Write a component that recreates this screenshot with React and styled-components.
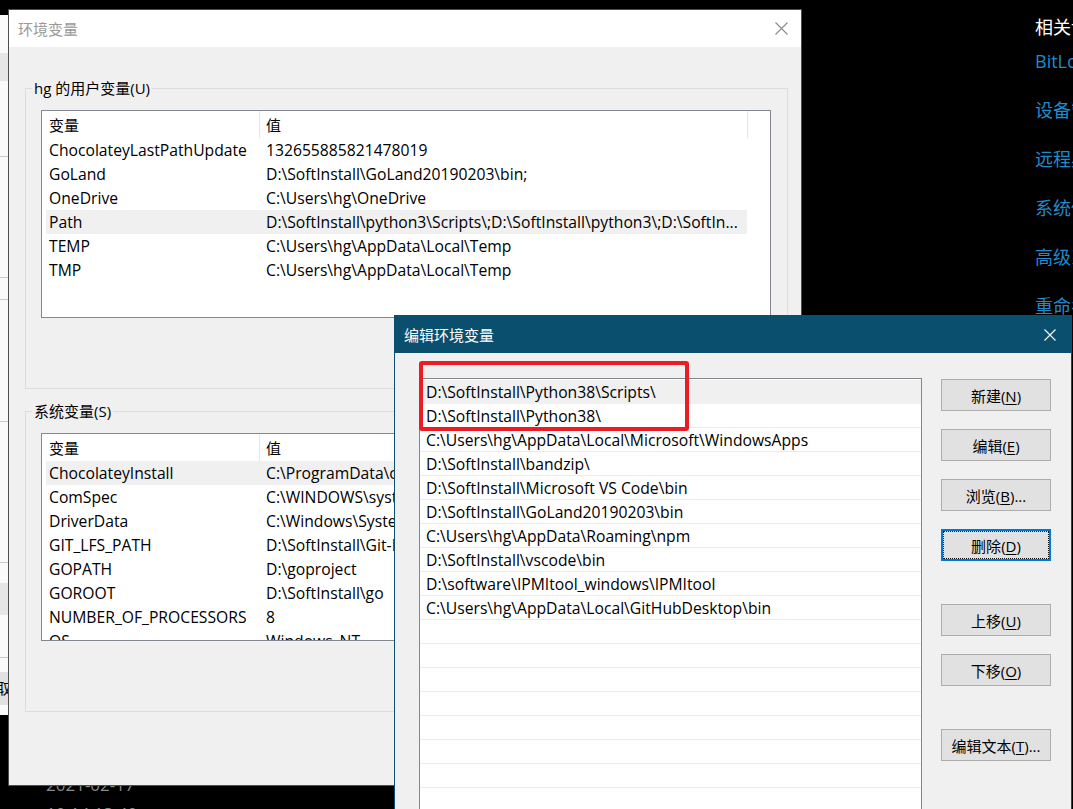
import React from 'react';
import styled, { createGlobalStyle } from 'styled-components';

const UI_FONT = `"Open Sans", "Noto Sans CJK SC", sans-serif`;

const GlobalStyle = createGlobalStyle`
  html, body { margin: 0; padding: 0; background: #000; }
  body { font-family: ${UI_FONT}; color: #000; }
  * { box-sizing: border-box; }
`;

const Desktop = styled.div`
  position: relative;
  width: 1073px;
  height: 809px;
  overflow: hidden;
  background: #000;
`;

/* window left behind the dialogs, only a sliver shows */
const BackWindow = styled.div`
  position: absolute;
  left: 0;
  top: 15px;
  width: 8px;
  height: 700px;
  display: flex;
  flex-direction: column;
  overflow: hidden;
  background: #fafafa;
`;

const Strip = styled.div`
  flex-shrink: 0;
  height: ${p => p.$h}px;
  background: ${p => p.$bg || '#fafafa'};
  border-bottom: ${p => (p.$line ? '1px solid #c9c9c9' : 'none')};
  font-size: 15px;
  line-height: ${p => p.$h}px;
  white-space: nowrap;
  text-indent: -4px;
`;

const SettingsPanel = styled.div`
  position: absolute;
  left: 1035px;
  top: 15px;
  display: flex;
  flex-direction: column;
  gap: 25px;
  font-size: 18px;
  line-height: 24px;
  white-space: nowrap;
`;

const SettingsHeading = styled.div`
  color: #fff;
  margin-bottom: -15px;
`;

const SettingsLink = styled.div`
  color: #1f8ccf;
`;

const DesktopClock = styled.div`
  position: absolute;
  left: 46px;
  top: 770px;
  color: #8a8a8a;
  font-size: 17px;
  line-height: 29px;
`;

const Window = styled.div`
  position: absolute;
  left: ${p => p.$x}px;
  top: ${p => p.$y}px;
  width: ${p => p.$w}px;
  height: ${p => p.$h}px;
  border: 1px solid ${p => p.$frame};
  background: #f0f0f0;
  display: flex;
  flex-direction: column;
`;

const TitleBar = styled.div`
  flex-shrink: 0;
  height: 37px;
  display: flex;
  align-items: center;
  justify-content: space-between;
  padding: 0 ${p => p.$padRight}px 0 9px;
  background: ${p => (p.$active ? '#0a4f6e' : '#fff')};
  color: ${p => (p.$active ? '#fff' : '#9a9a9a')};
  font-size: 15px;
`;

const EnvBody = styled.div`
  padding: 41px 13px 0 16px;
  display: flex;
  flex-direction: column;
`;

const Group = styled.div`
  position: relative;
  border: 1px solid #dcdcdc;
  padding: 21px 16px 70px 15px;
  & + & {
    margin-top: 22px;
  }
`;

const GroupLabel = styled.span`
  position: absolute;
  top: -11px;
  left: 6px;
  padding: 0 2px;
  background: #f0f0f0;
  font-size: 15px;
  line-height: 20px;
`;

const ListView = styled.div`
  height: 208px;
  border: 1px solid #828790;
  background: #fff;
  overflow: hidden;
`;

const ListHeader = styled.div`
  display: flex;
  height: 27px;
`;

const HeaderCell = styled.div`
  flex: ${p => (p.$w ? `0 0 ${p.$w}px` : '1')};
  padding-left: ${p => p.$pad}px;
  border-right: ${p => (p.$w ? '1px solid #e5e5e5' : 'none')};
  display: flex;
  align-items: center;
  font-size: 15px;
`;

const ListRow = styled.div`
  display: flex;
  align-items: center;
  height: 24px;
  width: 701px;
  margin-left: 4px;
  background: ${p => (p.$selected ? '#f0f0f0' : 'transparent')};
  font-size: 15.7px;
  white-space: nowrap;
`;

const NameCell = styled.div`
  flex: 0 0 213px;
  padding-left: 3px;
  overflow: hidden;
`;

const ValueCell = styled.div`
  flex: 1;
  padding-left: 7px;
  overflow: hidden;
`;

const EditBody = styled.div`
  position: relative;
  flex: 1;
  display: flex;
  gap: 19px;
  padding: 25px 19px 0 24px;
  min-height: 0;
`;

const PathList = styled.div`
  flex: 0 0 503px;
  border: 1px solid #828790;
  border-bottom: none;
  background: #fff;
  padding-top: 1px;
  overflow: hidden;
`;

const PathRow = styled.div`
  height: 24px;
  display: flex;
  align-items: center;
  padding-left: 6px;
  border-bottom: 1px solid ${p => (p.$selected ? '#f0f0f0' : '#ebebeb')};
  background: ${p => (p.$selected ? '#f0f0f0' : '#fff')};
  font-size: 15.7px;
  white-space: nowrap;
`;

const ButtonColumn = styled.div`
  flex: 0 0 110px;
  display: flex;
  flex-direction: column;
  padding-top: 1px;
`;

const DialogButton = styled.button`
  position: relative;
  height: 32px;
  margin-top: ${p => p.$gap || 0}px;
  padding: 0;
  background: #e1e1e1;
  border: ${p => (p.$focused ? '2px solid #0078d7' : '1px solid #adadad')};
  font-family: ${UI_FONT};
  font-size: 15px;
  color: #000;
  ${p =>
    p.$focused &&
    `
    &::after {
      content: '';
      position: absolute;
      inset: 0;
      border: 1px dotted #111;
    }
  `}
`;

const Key = styled.span`
  text-decoration: underline;
  text-underline-offset: 2px;
`;

const RedMark = styled.div`
  position: absolute;
  left: 24px;
  top: 8px;
  width: 270px;
  height: 70px;
  border: 4px solid #ed1c24;
  border-radius: 3px;
  pointer-events: none;
`;

const CloseIcon = ({ color, size }) => (
  <svg width={size} height={size} viewBox={`0 0 ${size} ${size}`}>
    <path d={`M0.5 0.5 L${size - 0.5} ${size - 0.5} M${size - 0.5} 0.5 L0.5 ${size - 0.5}`} stroke={color} strokeWidth="1.1" fill="none" />
  </svg>
);

const userVars = [
  ['ChocolateyLastPathUpdate', '132655885821478019'],
  ['GoLand', 'D:\\SoftInstall\\GoLand20190203\\bin;'],
  ['OneDrive', 'C:\\Users\\hg\\OneDrive'],
  ['Path', 'D:\\SoftInstall\\python3\\Scripts\\;D:\\SoftInstall\\python3\\;D:\\SoftIn...'],
  ['TEMP', 'C:\\Users\\hg\\AppData\\Local\\Temp'],
  ['TMP', 'C:\\Users\\hg\\AppData\\Local\\Temp'],
];

const systemVars = [
  ['ChocolateyInstall', 'C:\\ProgramData\\chocolatey'],
  ['ComSpec', 'C:\\WINDOWS\\system32\\cmd.exe'],
  ['DriverData', 'C:\\Windows\\System32\\Drivers\\DriverData'],
  ['GIT_LFS_PATH', 'D:\\SoftInstall\\Git-LFS'],
  ['GOPATH', 'D:\\goproject'],
  ['GOROOT', 'D:\\SoftInstall\\go'],
  ['NUMBER_OF_PROCESSORS', '8'],
  ['OS', 'Windows_NT'],
  ['Path', 'C:\\WINDOWS\\system32;C:\\WINDOWS'],
];

const paths = [
  'D:\\SoftInstall\\Python38\\Scripts\\',
  'D:\\SoftInstall\\Python38\\',
  'C:\\Users\\hg\\AppData\\Local\\Microsoft\\WindowsApps',
  'D:\\SoftInstall\\bandzip\\',
  'D:\\SoftInstall\\Microsoft VS Code\\bin',
  'D:\\SoftInstall\\GoLand20190203\\bin',
  'C:\\Users\\hg\\AppData\\Roaming\\npm',
  'D:\\SoftInstall\\vscode\\bin',
  'D:\\software\\IPMItool_windows\\IPMItool',
  'C:\\Users\\hg\\AppData\\Local\\GitHubDesktop\\bin',
  '', '', '', '', '', '', '', '', '', '',
];

const buttons = [
  { label: '新建', key: 'N', gap: 0 },
  { label: '编辑', key: 'E', gap: 18 },
  { label: '浏览', key: 'B', gap: 18, more: true },
  { label: '删除', key: 'D', gap: 18, focused: true },
  { label: '上移', key: 'U', gap: 43 },
  { label: '下移', key: 'O', gap: 18 },
  { label: '编辑文本', key: 'T', gap: 43, more: true },
];

const backStrips = [
  { h: 38 },
  { h: 28, bg: '#e6e6e6' },
  { h: 76, line: true },
  { h: 121, line: true },
  { h: 22, line: true },
  { h: 122, line: true },
  { h: 141, line: true },
  { h: 20 },
  { h: 32, bg: '#e6e6e6' },
  { h: 43, line: true },
  { h: 14 },
  { h: 33, bg: '#e1e1e1', text: '取消' },
  { h: 10 },
];

function VarTable({ rows, selected }) {
  return (
    <ListView>
      <ListHeader>
        <HeaderCell $w={218} $pad={7}>变量</HeaderCell>
        <HeaderCell $w={488} $pad={6}>值</HeaderCell>
        <HeaderCell />
      </ListHeader>
      {rows.map(([name, value], i) => (
        <ListRow key={name + i} $selected={i === selected}>
          <NameCell>{name}</NameCell>
          <ValueCell>{value}</ValueCell>
        </ListRow>
      ))}
    </ListView>
  );
}

export default function App() {
  return (
    <>
      <GlobalStyle />
      <Desktop>
        <BackWindow>
          {backStrips.map((s, i) => (
            <Strip key={i} $h={s.h} $bg={s.bg} $line={s.line}>{s.text}</Strip>
          ))}
        </BackWindow>

        <SettingsPanel>
          <SettingsHeading>相关设置</SettingsHeading>
          <SettingsLink>BitLocker 设置</SettingsLink>
          <SettingsLink>设备管理器</SettingsLink>
          <SettingsLink>远程桌面</SettingsLink>
          <SettingsLink>系统保护</SettingsLink>
          <SettingsLink>高级系统设置</SettingsLink>
          <SettingsLink>重命名这台电脑</SettingsLink>
        </SettingsPanel>

        <DesktopClock>
          <div>2021-02-17</div>
          <div>10:14:13:40</div>
        </DesktopClock>

        <Window $x={8} $y={9} $w={794} $h={777} $frame="#4d4d4d">
          <TitleBar $padRight={13}>
            <span>环境变量</span>
            <CloseIcon color="#8a8a8a" size={13} />
          </TitleBar>
          <EnvBody>
            <Group>
              <GroupLabel>hg 的用户变量(U)</GroupLabel>
              <VarTable rows={userVars} selected={3} />
            </Group>
            <Group>
              <GroupLabel>系统变量(S)</GroupLabel>
              <VarTable rows={systemVars} selected={0} />
            </Group>
          </EnvBody>
        </Window>

        <Window $x={394} $y={315} $w={678} $h={520} $frame="#0a4f6e">
          <TitleBar $active $padRight={15}>
            <span>编辑环境变量</span>
            <CloseIcon color="#fff" size={12} />
          </TitleBar>
          <EditBody>
            <PathList>
              {paths.map((p, i) => (
                <PathRow key={i} $selected={i === 0}>{p}</PathRow>
              ))}
            </PathList>
            <ButtonColumn>
              {buttons.map(b => (
                <DialogButton key={b.key} $gap={b.gap} $focused={b.focused}>
                  {b.label}(<Key>{b.key}</Key>){b.more ? '...' : ''}
                </DialogButton>
              ))}
            </ButtonColumn>
            <RedMark />
          </EditBody>
        </Window>
      </Desktop>
    </>
  );
}
